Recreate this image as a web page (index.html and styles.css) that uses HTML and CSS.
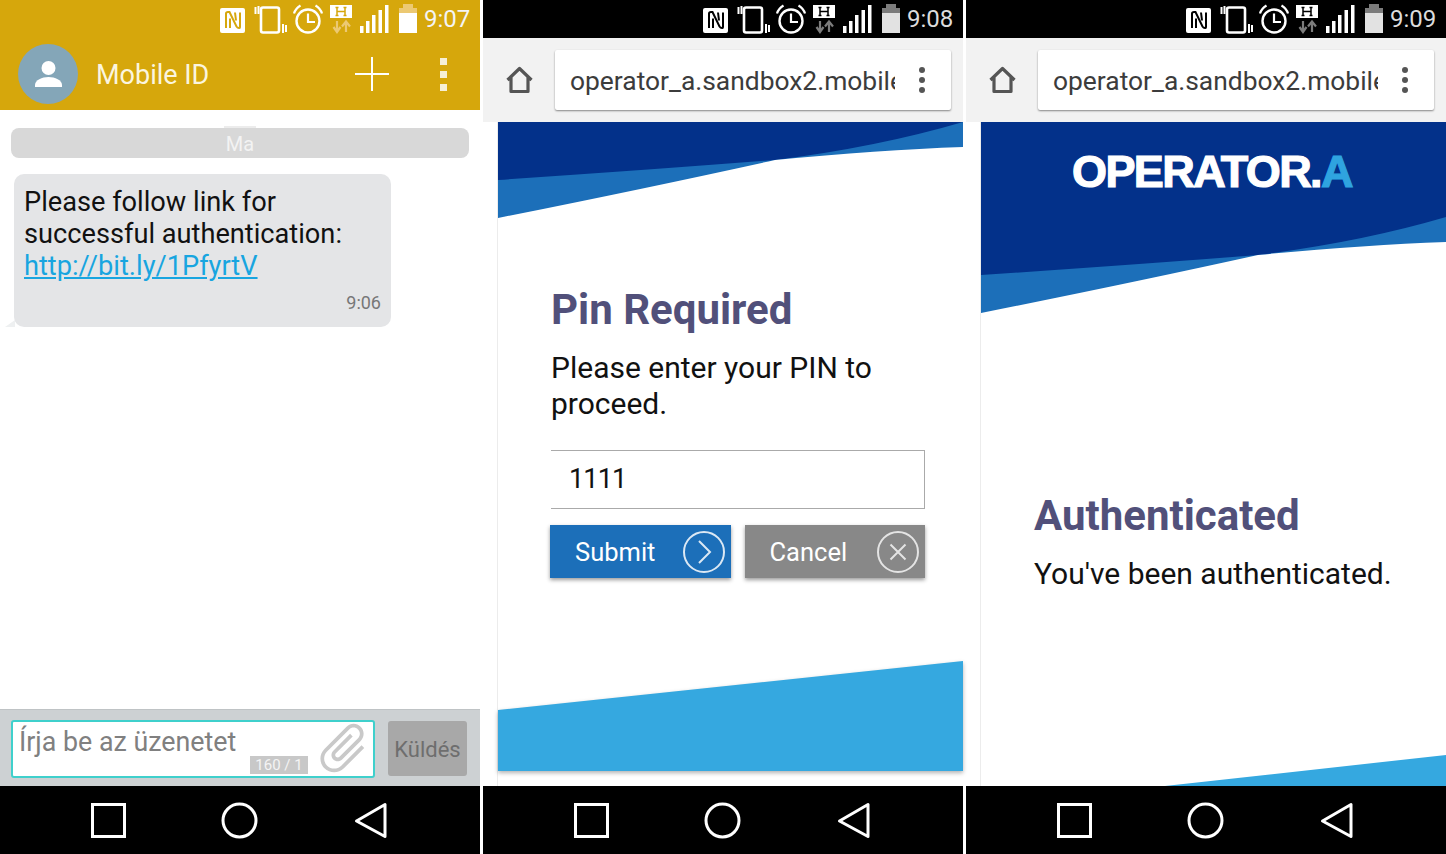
FILE: index.html
```html
<!DOCTYPE html>
<html lang="hu">
<head>
<meta charset="utf-8">
<title>Mobile ID</title>
<link rel="stylesheet" href="styles.css">
</head>
<body>
<svg class="defs" xmlns="http://www.w3.org/2000/svg">
  <symbol id="status" viewBox="0 0 198 38">
    <rect x="0" y="8" width="25" height="25" rx="2" fill="currentColor"/>
    <path d="M6 28V13.500q0-1.500 2-1.500h1.500l7 14.500q1 1.500 2.500 1.500h.500q.500 0 .500-1V12.500M10 18.500V28M15 12.500l1 8" fill="none" class="cut" stroke-width="2"/>
    <rect x="41" y="7.500" width="18" height="25" rx="2" fill="none" stroke="currentColor" stroke-width="2.600"/>
    <path d="M35.500 7v7M38.500 6v8M63 24v9M66 25v7" stroke="currentColor" stroke-width="2" fill="none"/>
    <circle cx="88" cy="21" r="11.500" fill="none" stroke="currentColor" stroke-width="2.400"/>
    <path d="M88 13.500V22h7" fill="none" stroke="currentColor" stroke-width="2.200"/>
    <path d="M74 13.500q1.500-5 6.500-8M102 13.500q-1.500-5-6.500-8" fill="none" stroke="currentColor" stroke-width="2.200"/>
    <rect x="110" y="5" width="22" height="13" fill="currentColor"/>
    <path d="M117 7.500v8M125 7.500v8M117 11.500h8M115.500 7.500h3M123.500 7.500h3M115.500 15.500h3M123.500 15.500h3" class="cut" stroke-width="1.500" fill="none"/>
    <path d="M117 21v10M113.500 27l3.500 5 3.500-5M126 32V22M122 26.500l4-5 4 5" class="dim-line" stroke-width="2.200" fill="none"/>
    <rect x="140" y="26" width="3.500" height="7" fill="currentColor"/>
    <rect x="146" y="21" width="3.500" height="12" fill="currentColor"/>
    <rect x="152" y="15" width="3.500" height="18" fill="currentColor"/>
    <rect x="158.500" y="10" width="3.500" height="23" fill="currentColor"/>
    <rect x="165" y="5" width="3.500" height="28" fill="currentColor"/>
    <rect x="183" y="4" width="10" height="5" class="dim-fill"/>
    <rect x="179" y="8" width="18" height="5" class="dim-fill"/>
    <rect x="179" y="13" width="18" height="20" class="bat"/>
  </symbol>
  <symbol id="nav" viewBox="0 0 480 68">
    <rect x="92.500" y="18.500" width="32" height="32" fill="none" stroke="#fff" stroke-width="3"/>
    <circle cx="239.500" cy="34.500" r="16.500" fill="none" stroke="#fff" stroke-width="3"/>
    <path d="M385 18.500v32L356.500 35z" fill="none" stroke="#fff" stroke-width="3" stroke-linejoin="round"/>
  </symbol>
  <symbol id="home" viewBox="0 0 30 30">
    <path d="M2.500 15L14.500 3.500 26.500 15M6 12.500V26.500H23V12.500" fill="none" stroke="#555" stroke-width="3.200" stroke-linejoin="round"/>
  </symbol>
  <symbol id="banner" viewBox="0 0 465 96" preserveAspectRatio="none">
    <rect width="465" height="96" fill="#03318a"/>
    <path d="M0 58Q150 48 277 38 380 25 465 0V96H0z" fill="#1c6fb9"/>
    <path d="M0 96Q150 66 277 38 380 28 465 25V96z" fill="#fff"/>
  </symbol>
</svg>

<main class="screens">

  <section class="phone">
    <header class="msg-head">
      <div class="statusbar statusbar-gold">
        <svg class="status-icons"><use href="#status"/></svg>
        <span class="clock">9:07</span>
      </div>
      <div class="msg-title">
        <svg class="avatar" viewBox="0 0 60 60">
          <circle cx="30" cy="30" r="30" fill="#84a6b8"/>
          <circle cx="30.500" cy="24" r="7" fill="#fff"/>
          <path d="M17 43v-2c0-5 7-8 13.500-8S44 36 44 41v2z" fill="#fff"/>
        </svg>
        <span class="contact">Mobile ID</span>
        <svg class="plus" viewBox="0 0 34 34"><path d="M17 0v34M0 17h34" stroke="#fff" stroke-width="2"/></svg>
        <span class="squares"><i></i><i></i><i></i></span>
      </div>
    </header>
    <div class="thread">
      <div class="datebar"><span>Ma</span></div>
      <div class="bubble">
        <p class="bubble-text">Please follow link for successful authentication: <a href="#">http://bit.ly/1PfyrtV</a></p>
        <time class="bubble-time">9:06</time>
      </div>
    </div>
    <form class="composer">
      <div class="compose-box">
        <span class="placeholder">Írja be az üzenetet</span>
        <span class="counter">160 / 1</span>
        <svg class="clip" viewBox="0 0 24 24"><path transform="rotate(45 12 12)" fill="#c9c9c9" d="M16.500 6v11.500c0 2.210-1.790 4-4 4s-4-1.790-4-4V5c0-1.380 1.120-2.500 2.500-2.500s2.500 1.120 2.500 2.500v10.500c0 .550-.450 1-1 1s-1-.450-1-1V6H10v9.500c0 1.380 1.120 2.500 2.500 2.500s2.500-1.120 2.500-2.500V5c0-2.210-1.790-4-4-4S7 2.790 7 5v12.500c0 3.040 2.460 5.500 5.500 5.500s5.500-2.460 5.500-5.500V6h-1.500z"/></svg>
      </div>
      <span class="send">Küldés</span>
    </form>
    <svg class="navbar"><use href="#nav"/></svg>
  </section>

  <section class="phone">
    <div class="statusbar statusbar-black">
      <svg class="status-icons"><use href="#status"/></svg>
      <span class="clock">9:08</span>
    </div>
    <div class="toolbar">
      <svg class="home"><use href="#home"/></svg>
      <div class="urlbox">
        <span class="url">operator_a.sandbox2.mobile</span>
        <span class="dots"><i></i><i></i><i></i></span>
      </div>
    </div>
    <div class="page">
      <svg class="banner banner-short"><use href="#banner"/></svg>
      <div class="pin-body">
        <h1 class="title">Pin Required</h1>
        <p class="copy">Please enter your PIN to proceed.</p>
        <div class="pin-input">1111</div>
        <div class="actions">
          <span class="btn btn-blue">Submit
            <svg class="btn-icon" viewBox="0 0 42 42"><circle cx="21" cy="21" r="20" fill="none" stroke="#dbe8f4" stroke-width="2"/><path d="M16 10l11 11-11 11" fill="none" stroke="#dbe8f4" stroke-width="2"/></svg>
          </span>
          <span class="btn btn-grey">Cancel
            <svg class="btn-icon" viewBox="0 0 42 42"><circle cx="21" cy="21" r="20" fill="none" stroke="#e4e4e4" stroke-width="2"/><path d="M13.500 13.500l15 15M28.500 13.500l-15 15" fill="none" stroke="#e4e4e4" stroke-width="2"/></svg>
          </span>
        </div>
      </div>
      <svg class="foot-wave" viewBox="0 0 465 110" preserveAspectRatio="none"><path d="M0 49L465 0V110H0z" fill="#35a8e0"/></svg>
    </div>
    <svg class="navbar"><use href="#nav"/></svg>
  </section>

  <section class="phone">
    <div class="statusbar statusbar-black">
      <svg class="status-icons"><use href="#status"/></svg>
      <span class="clock">9:09</span>
    </div>
    <div class="toolbar">
      <svg class="home"><use href="#home"/></svg>
      <div class="urlbox">
        <span class="url">operator_a.sandbox2.mobile</span>
        <span class="dots"><i></i><i></i><i></i></span>
      </div>
    </div>
    <div class="page page-auth">
      <div class="hero">
        <svg class="banner banner-tall"><use href="#banner"/></svg>
        <div class="logo">OPERATOR.<span class="logo-a">A</span></div>
      </div>
      <div class="auth-body">
        <h1 class="title">Authenticated</h1>
        <p class="copy">You've been authenticated.</p>
      </div>
      <svg class="corner-wave" viewBox="0 0 281 31"><path d="M0 31L281 0V31z" fill="#35a8e0"/></svg>
    </div>
    <svg class="navbar"><use href="#nav"/></svg>
  </section>

</main>
</body>
</html>
```

FILE: styles.css
```css
* { box-sizing: border-box; }

html, body {
  margin: 0;
  height: 100%;
  background: #fff;
}

body {
  font-family: Roboto, "Liberation Sans", sans-serif;
  overflow: hidden;
}

.defs { display: none; }

.screens {
  display: flex;
  gap: 3px;
  width: 1446px;
  height: 854px;
}

.phone {
  display: flex;
  flex-direction: column;
  width: 480px;
  height: 854px;
  background: #fff;
}

/* status bar */
.statusbar {
  display: flex;
  align-items: center;
  justify-content: flex-end;
  height: 38px;
  flex: none;
  padding-right: 11px;
  gap: 6px;
  color: #fff;
}

.status-icons {
  width: 198px;
  height: 38px;
  display: block;
}

.clock {
  font-size: 24px;
  line-height: 40px;
  width: 45px;
  white-space: nowrap;
  color: #f4f4f4;
}

.statusbar-gold {
  --cut: #d6a70c;
  --dim: #ecc973;
  --bat: #fff;
}

.statusbar-black {
  background: #000;
  --cut: #000;
  --dim: #7c7c7c;
  --bat: #e2e2e2;
}

.statusbar-black .clock { color: #dcdcdc; }

.cut { stroke: var(--cut); }
.dim-line { stroke: var(--dim); }
.dim-fill { fill: var(--dim); }
.statusbar-black .dim-fill { fill: #cfcfcf; }
.bat { fill: var(--bat); }

/* message app */
.msg-head {
  flex: none;
  height: 110px;
  background: #d6a70c;
}

.msg-title {
  display: flex;
  align-items: center;
  height: 72px;
  padding-left: 18px;
}

.avatar {
  width: 60px;
  height: 60px;
  flex: none;
}

.contact {
  margin-left: 18px;
  padding-top: 2px;
  font-size: 27px;
  color: #fbf5df;
  width: 259px;
}

.plus {
  width: 34px;
  height: 34px;
  flex: none;
}

.squares {
  display: flex;
  flex-direction: column;
  gap: 6px;
  margin-left: 51px;
}

.squares i {
  display: block;
  width: 7px;
  height: 7px;
  background: #f6efd6;
}

.thread {
  flex: 1;
  padding: 18px 11px 0;
}

.datebar {
  position: relative;
  height: 30px;
  border-radius: 8px;
  background: #d8d8d8;
  color: #f3f3f3;
  font-size: 20px;
  line-height: 33px;
  text-align: center;
}

.datebar::before {
  content: "";
  position: absolute;
  left: 213px;
  top: -2px;
  width: 32px;
  height: 2px;
  background: #ececec;
}

.bubble {
  position: relative;
  width: 377px;
  height: 153px;
  margin: 16px 0 0 3px;
  padding: 12px 10px 0 10px;
  background: #e4e5e7;
  border-radius: 10px;
}

.bubble::before {
  content: "";
  position: absolute;
  left: -9px;
  bottom: 0;
  border-style: solid;
  border-width: 0 0 7px 10px;
  border-color: transparent transparent #eef0f1 transparent;
}

.bubble-text {
  margin: 0;
  font-size: 27.200px;
  line-height: 32px;
  color: #111;
  width: 345px;
}

.bubble-text a {
  color: #18a5e0;
}

.bubble-time {
  display: block;
  margin-top: 10px;
  text-align: right;
  font-size: 18px;
  color: #777;
}

.composer {
  flex: none;
  display: flex;
  align-items: flex-start;
  gap: 13px;
  height: 77px;
  margin: 0;
  padding: 10px 13px 0 11px;
  background: #cdd1d3;
  border-top: 1px solid #bfc3c5;
}

.compose-box {
  position: relative;
  width: 364px;
  height: 58px;
  background: #fff;
  border: 2px solid #3fd0cc;
  border-radius: 3px;
  padding: 0 0 0 6px;
}

.placeholder {
  display: block;
  font-size: 26.800px;
  line-height: 40px;
  color: #808080;
}

.counter {
  position: absolute;
  left: 237px;
  top: 34px;
  width: 58px;
  height: 18px;
  background: #c8c8c8;
  color: #f4f4f4;
  font-size: 15px;
  line-height: 18px;
  text-align: center;
}

.clip {
  position: absolute;
  left: 300px;
  top: -4px;
  width: 60px;
  height: 60px;
}

.send {
  display: block;
  width: 79px;
  height: 55px;
  margin-top: 1px;
  background: #a8a8a8;
  border-radius: 3px;
  color: #6e6e6e;
  font-size: 22px;
  line-height: 58px;
  text-align: center;
}

.navbar {
  flex: none;
  display: block;
  width: 480px;
  height: 68px;
  background: #000;
}

/* browser */
.toolbar {
  flex: none;
  display: flex;
  align-items: center;
  height: 84px;
  padding: 0 12px 0 22px;
  background: #f2f2f2;
}

.home {
  width: 30px;
  height: 30px;
  flex: none;
  margin-right: 20px;
}

.urlbox {
  display: flex;
  align-items: center;
  width: 396px;
  height: 60px;
  background: #fff;
  border-radius: 2px;
  box-shadow: 0 1px 2px rgba(0, 0, 0, .45);
  padding: 0 26px 0 15px;
}

.url {
  width: 325px;
  flex: none;
  overflow: hidden;
  white-space: nowrap;
  padding-top: 1px;
  font-size: 26.400px;
  color: #3c3c3c;
  margin-right: 24px;
}

.dots {
  display: flex;
  flex-direction: column;
  gap: 4px;
}

.dots i {
  display: block;
  width: 6px;
  height: 6px;
  border-radius: 50%;
  background: #555;
}

/* web page */
.page {
  flex: 1;
  display: flex;
  flex-direction: column;
  min-height: 0;
  margin-left: 14px;
  border-left: 1px solid #ececec;
  position: relative;
}

.banner {
  display: block;
  flex: none;
  width: 465px;
}

.banner-short { height: 96px; }
.banner-tall { height: 96px; margin-top: 95px; }

.hero {
  position: relative;
  height: 191px;
  flex: none;
  background: #03318a;
}

.logo {
  position: absolute;
  left: 91px;
  top: 23px;
  font-family: "Liberation Sans", Arial, sans-serif;
  font-weight: 700;
  font-size: 45px;
  line-height: 54px;
  letter-spacing: -1.600px;
  color: #fff;
  -webkit-text-stroke: 1.200px currentColor;
}

.logo-a { color: #2fa4e0; }

.title {
  margin: 0;
  font-size: 42px;
  line-height: 50px;
  font-weight: 700;
  color: #51507a;
}

.copy {
  margin: 0;
  font-size: 30px;
  line-height: 36px;
  color: #111;
}

.pin-body {
  padding: 67px 38px 0 53px;
}

.pin-body .copy { margin-top: 15px; }

.pin-input {
  width: 374px;
  height: 59px;
  margin-top: 28px;
  padding-left: 18px;
  border: 1px solid #aaa;
  border-left: 0;
  font-size: 27px;
  line-height: 56px;
  letter-spacing: -.800px;
  color: #111;
}

.actions {
  display: flex;
  gap: 14px;
  margin: 16px 0 0 -1px;
}

.btn {
  display: flex;
  align-items: center;
  justify-content: space-between;
  width: 181px;
  height: 53px;
  padding: 0 6px 0 25px;
  color: #fff;
  font-size: 25.500px;
  line-height: 50px;
  box-shadow: 0 2px 4px rgba(0, 0, 0, .4);
}

.btn-blue { background: #1c6fb9; }
.btn-grey { background: #888; }

.btn-icon {
  width: 42px;
  height: 42px;
  flex: none;
}

.foot-wave {
  display: block;
  flex: none;
  width: 465px;
  height: 110px;
  margin: auto 0 15px;
  filter: drop-shadow(0 2px 2px rgba(0, 0, 0, .3));
}

.auth-body {
  padding: 178px 20px 0 53px;
}

.auth-body .copy { margin-top: 15px; }

.corner-wave {
  position: absolute;
  right: 0;
  bottom: 0;
  display: block;
  width: 281px;
  height: 31px;
}
```
